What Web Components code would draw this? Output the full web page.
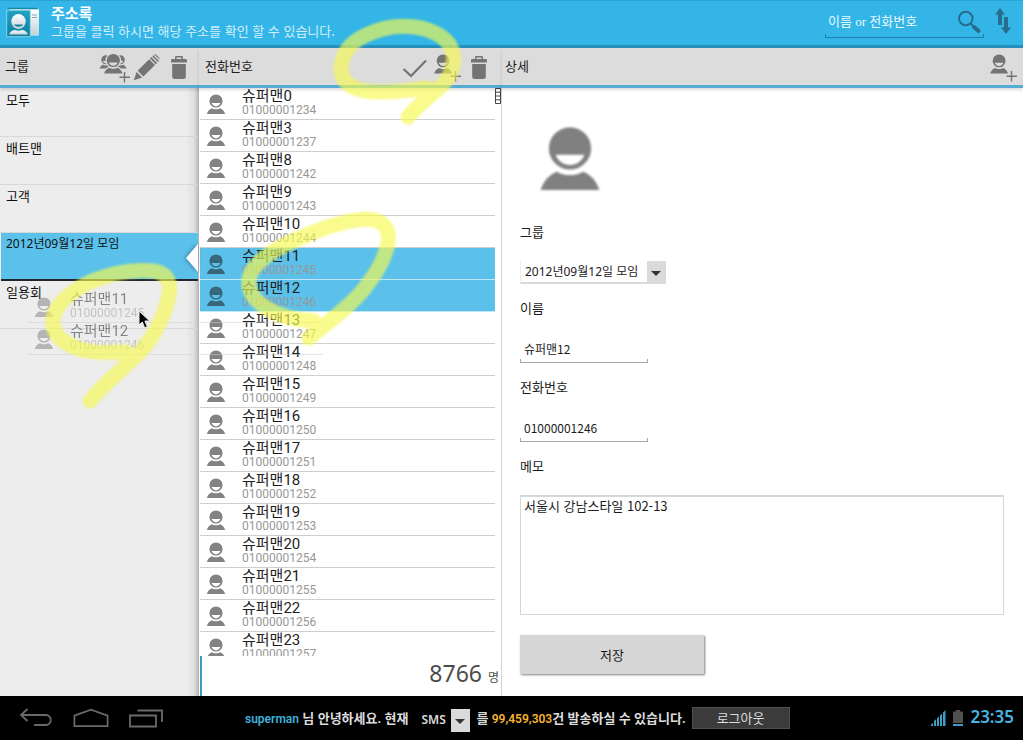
<!DOCTYPE html>
<html lang="ko">
<head>
<meta charset="utf-8">
<meta name="viewport" content="width=device-width, initial-scale=1">
<title>주소록</title>
<style>
  html, body { margin: 0; height: 100%; }
  body {
    font: 13px/18px "Noto Sans", "Noto Sans CJK KR", sans-serif;
    color: #1c1c1c; background: #fff; overflow: hidden;
  }
</style>
</head>
<body>
<address-app></address-app>

<script>
const define = (name, html, setup) => {
  const template = document.createElement('template');
  template.innerHTML = '<style>*{box-sizing:border-box}[hidden]{display:none}</style>' + html;
  customElements.define(name, class extends HTMLElement {
    connectedCallback() {
      if (this.shadowRoot) return;
      this.attachShadow({ mode: 'open' }).append(template.content.cloneNode(true));
      if (setup) setup(this, this.shadowRoot);
    }
  });
};

const PERSON = '<path fill-rule="evenodd" d="M10 .4a6.6 6.6 0 1 1 0 13.2A6.6 6.6 0 0 1 10 .4zM5.5 9c.7 2 2.500 3.200 4.500 3.200s3.800-1.200 4.500-3.200z"/><path d="M.8 20c.9-2.800 2.900-5 5.200-5.700 1.900 1.400 6.100 1.400 8 0 2.300.7 4.300 2.900 5.200 5.700z"/>';
const PLUS = '<path d="M24.500 20v10.500M19.500 25.200h10.500" fill="none" stroke="currentColor" stroke-width="1.400"/>';
const ICONS = {
  person: ['0 0 20 20', PERSON],
  personAdd: ['0 0 32 32', '<g transform="translate(2.300 3) scale(.98)">' + PERSON + '</g>' + PLUS],
  groupAdd: ['0 0 32 32', '<g transform="translate(0 4) scale(.68)">' + PERSON + '</g><g transform="translate(14.500 4) scale(.68)">' + PERSON + '</g><g transform="translate(4.300 2.500) scale(1)" stroke="#dcdcdc" stroke-width="2.600">' + PERSON + '</g><g transform="translate(4.300 2.500)">' + PERSON + '</g><g transform="translate(1 1)">' + PLUS + '</g>'],
  pencil: ['0 0 32 32', '<path d="M2.800 29.200 5.600 21l5.600 5.600zM6.600 19.800 18.200 8.200l5.800 5.800-11.600 11.600zM19 7.400l1.300-1.300 5.800 5.800-1.300 1.300zM21.200 5.300l1.100-1.100 5.800 5.800-1.100 1.100zM23.100 3.400c1.300-1.200 6.300 3.800 5.700 5.200z"/>'],
  trash: ['0 0 32 32', '<path fill-rule="evenodd" d="M12 8V6.200C12 5.200 12.600 5 13.400 5h5.200c.8 0 1.400.2 1.400 1.200V8h2.600c1 0 1.400.6 1.400 1.500V11.500H8V9.500C8 8.600 8.400 8 9.400 8zM13.500 8h5V6.500h-5zM9.200 13h13.600v12.500c0 1.700-.8 2.500-2.500 2.500h-8.600c-1.700 0-2.500-.8-2.500-2.500z"/>'],
  check: ['0 0 32 32', '<path d="M4.500 18 12 25 27 9.500" fill="none" stroke="currentColor" stroke-width="2.200"/>'],
  search: ['0 0 26 26', '<circle cx="7.800" cy="8.500" r="6.800" fill="none" stroke="currentColor" stroke-width="2"/><path d="m12.500 13.500 8 7.500" fill="none" stroke="currentColor" stroke-width="2"/><path d="m16 17 4.500 4" stroke="currentColor" stroke-width="4" stroke-linecap="round"/>'],
  sort: ['0 0 16 26', '<path d="M5.500 0 10.500 6.500H7.500V17h-4V6.500h-3zM11.500 26 6.500 19.500h3V9h4v10.500h3z" transform="translate(-.5)"/>'],
  back: ['0 0 36 20', '<path d="M8.500 1 2 7l6.500 6M2 7h24.500c7 0 7 10 0 10H15" fill="none" stroke="currentColor" stroke-width="1.800"/>'],
  home: ['0 0 38 20', '<path d="M1.500 7.500 19 1.200 36.500 7.500V18.500h-35z" fill="none" stroke="currentColor" stroke-width="1.800"/>'],
  recents: ['0 0 36 20', '<path d="M3 7.500h26v11H3zM10.500 2.500H35v11.500" fill="none" stroke="currentColor" stroke-width="1.800"/>'],
  signal: ['0 0 15 16', '<path d="M0 16v-1.500l2-1.500v3zM3 16v-5l2-1.800V16zM6 16V8.500l2-2V16zM9 16V5.500l2-2V16zM12 16V2.500L14.500 0v16z"/>'],
  battery: ['0 0 10 16', '<path d="M3 0h4v1.500h3V13H0V1.500h3z" fill="#505050"/><path d="M0 14h10v2H0z"/>'],
  ladder: ['0 0 6 16', '<path d="M.5.500h5v15h-5zM.5 4.200h5M.5 8h5M.5 11.800h5" fill="#fff" stroke="#444" stroke-width="1"/>'],
  pointer: ['0 0 14 20', '<path d="M1 1v14l3.300-3 2.400 5.800 2.600-1.100L6.900 11h4.800z" fill="#000" stroke="#eee" stroke-width="1"/>'],
  book: ['0 0 34 32', '<defs><linearGradient id="g" x2="0" y2="1"><stop offset="0" stop-color="#22a3c4"/><stop offset="1" stop-color="#0d7f9f"/></linearGradient><linearGradient id="w" x2="0" y2="1"><stop stop-color="#fff"/><stop offset="1" stop-color="#c4d3d8"/></linearGradient></defs><path d="M3 1.500h30V28.500H22z" fill="#edf5f7"/><path d="M3 .8h28l2 1.400H1z" fill="#178aaa"/><path d="M24 3h9v25h-9z" fill="url(#w)"/><path d="M26 8h5M26 10.500h5" stroke="#84aab5"/><path d="M.7 3.200h23.600v26.500H.7z" fill="url(#g)" stroke="#9fe0f0" stroke-width=".8"/><ellipse cx="12.500" cy="14.500" rx="7.200" ry="7.500" fill="url(#w)"/><path d="M8 17.500c1.500 3 7.500 3 9 0z" fill="#0e819f"/><path d="M3 27.500c1.500-3.500 4-4.500 6-4.500 2 1 5 1 7 0 2 0 4.500 1 6 4.500z" fill="url(#w)"/>']
};

define('x-icon', `
  <style>:host{display:block;flex:none;width:32px;height:32px} svg{display:block;width:100%;height:100%;fill:currentColor}</style>
  <svg aria-hidden="true"></svg>`, (el, root) => {
  const [box, body] = ICONS[el.getAttribute('name')];
  const svg = root.querySelector('svg');
  svg.setAttribute('viewBox', box);
  svg.innerHTML = body;
});

define('tool-bar', `
  <style>
    :host{display:flex;align-items:center;height:40px;padding:0 4px 0 5px;background:#dcdcdc;
      border-bottom:3px solid #56acd3;box-shadow:0 2px 3px rgba(0,0,0,.14);position:relative;z-index:2}
    h2{margin:0;padding-bottom:2px;flex:1;font-size:13px;line-height:18px;font-weight:400}
  </style>
  <h2><slot></slot></h2><slot name="tool"></slot>`);

define('tool-button', `
  <style>
    :host{display:block}
    button{display:block;padding:0;border:0;background:none;color:#747474}
  </style>
  <button type="button"></button>`, (el, root) => {
  const b = root.querySelector('button');
  b.setAttribute('aria-label', el.getAttribute('label'));
  b.innerHTML = `<x-icon name="${el.getAttribute('icon')}"></x-icon>`;
});

define('app-header', `
  <style>
    :host{display:flex;align-items:center;height:48px;padding:0 12px 0 6px;background:#33b5e7;color:#fff;
      border-top:1px solid #2ba4d3;border-bottom:3px solid #2590bb}
    .logo{width:34px;height:32px}
    .titles{flex:1;margin-left:11px;padding-bottom:2px}
    h1{margin:0;font-size:15px;line-height:18px;font-weight:700}
    p{margin:0;color:#d3effa;font-family:"Noto Sans CJK KR",sans-serif}
    label{display:flex;align-items:center;width:159px;height:30px;padding-left:3px;
      background:linear-gradient(#1b80aa,#1b80aa) left bottom/1px 4px no-repeat,
        linear-gradient(#1b80aa,#1b80aa) right bottom/1px 4px no-repeat,
        linear-gradient(#1b80aa,#1b80aa) left bottom/100% 1px no-repeat}
    input{flex:1;min-width:0;padding:0 0 2px;border:0;outline:0;background:none;color:#fff;
      font:13px/18px "Liberation Serif","Noto Sans CJK KR",serif}
    input::placeholder{color:#e8f8ff;opacity:1}
    label x-icon{width:26px;height:26px;color:#256e8c}
    button{padding:0;border:0;background:none;color:#256e8c;margin-left:11px}
    button x-icon{width:16px;height:26px;margin-bottom:4px}
  </style>
  <x-icon class="logo" name="book"></x-icon>
  <div class="titles"><h1>주소록</h1><p>그룹을 클릭 하시면 해당 주소를 확인 할 수 있습니다.</p></div>
  <label><input type="text" placeholder="이름 or 전화번호" aria-label="검색"><x-icon name="search"></x-icon></label>
  <button type="button" aria-label="정렬"><x-icon name="sort"></x-icon></button>`);

define('group-item', `
  <style>
    :host{display:block;position:relative;height:48px;padding:0 6px;border-bottom:1px solid #d8d8d8;
      font-size:13px;line-height:22px;color:#111}
    :host([selected]){margin-left:1px;padding-left:5px;background:#5bc1eb;border-bottom:2px solid #20262c;font-size:12px}
    .notch{display:none}
    :host([selected]) .notch{display:block;position:absolute;right:0;top:11px;width:12px;height:28px;
      filter:drop-shadow(-1px 0 2px rgba(0,0,0,.35))}
    .notch i{display:block;width:12px;height:28px;background:#fff;clip-path:polygon(100% 0,0 50%,100% 100%)}
  </style>
  <slot></slot><span class="notch"><i></i></span>`);

define('group-panel', `
  <style>
    :host{display:flex;flex-direction:column;min-width:0;min-height:0}
    .list{flex:1;padding-top:1px;background:linear-gradient(to left,rgba(0,0,0,.2),rgba(0,0,0,.06) 4px,transparent 12px) #ededed;
      border-right:1px solid #b4b4b4}
  </style>
  <tool-bar>그룹
    <tool-button slot="tool" icon="groupAdd" label="그룹 추가"></tool-button>
    <tool-button slot="tool" icon="pencil" label="그룹 수정"></tool-button>
    <tool-button slot="tool" icon="trash" label="그룹 삭제"></tool-button>
  </tool-bar>
  <div class="list">
    <group-item>모두</group-item>
    <group-item>배트맨</group-item>
    <group-item>고객</group-item>
    <group-item selected>2012년09월12일 모임</group-item>
    <group-item>일용회</group-item>
  </div>`);

define('contact-row', `
  <style>
    :host{display:flex;height:32px;padding-left:6px;border-bottom:1px solid #cfcfcf;color:rgba(30,30,30,.55);
      font-family:Roboto,"Noto Sans CJK KR",sans-serif}
    :host([selected]){background:#5bc1eb;border-color:#c2e6f6}
    x-icon{width:20px;height:20px;margin:6px 16px 0 0}
    div{white-space:nowrap}
    b{display:block;font-weight:400;font-size:15px;line-height:16px;color:#1e1e1e}
    span{display:block;font-size:12px;line-height:13px;color:#989898}
  </style>
  <x-icon name="person"></x-icon>
  <div><b></b><span></span></div>`, (el, root) => {
  root.querySelector('b').textContent = el.getAttribute('name');
  root.querySelector('span').textContent = el.getAttribute('phone');
});

define('contact-panel', `
  <style>
    :host{display:flex;flex-direction:column;min-width:0;min-height:0;background:#fff}
    tool-bar{padding-right:7px;padding-left:6px}
    .body{flex:1;display:flex;flex-direction:column;min-height:0;border-right:1px solid #d0d0d0;padding-left:1px}
    .scroll{flex:1;display:flex;min-height:0;overflow:hidden}
    .rows{flex:1;min-width:0}
    .scroll x-icon{width:6px;height:16px}
    .total{flex:none;display:flex;justify-content:flex-end;align-items:baseline;height:40px;padding-right:2px;
      border-left:2px solid #3b9dbd;color:#4c4c4c;font-size:12px;line-height:34px}
    .total strong{font-weight:400;font-size:23px;margin-right:6px}
  </style>
  <tool-bar>전화번호
    <tool-button slot="tool" icon="check" label="전체 선택"></tool-button>
    <tool-button slot="tool" icon="personAdd" label="연락처 추가"></tool-button>
    <tool-button slot="tool" icon="trash" label="연락처 삭제"></tool-button>
  </tool-bar>
  <div class="body">
    <div class="scroll"><div class="rows"></div><x-icon name="ladder"></x-icon></div>
    <div class="total"><strong>8766</strong>명</div>
  </div>`, (el, root) => {
  const people = [[0, 1234], [3, 1237], [8, 1242], [9, 1243]];
  for (let n = 10; n <= 23; n++) people.push([n, 1234 + n]);
  root.querySelector('.rows').innerHTML = people.map(([n, p]) =>
    `<contact-row name="슈퍼맨${n}" phone="0100000${p}" ${n === 11 || n === 12 ? 'selected' : ''}></contact-row>`).join('');
});

define('drop-down', `
  <style>
    :host{display:inline-flex;height:23px;position:relative}
    select{appearance:none;height:100%;margin:0;padding:0 24px 0 5px;border:0;border-radius:0;outline:0;
      font:inherit;color:inherit;
      background:linear-gradient(#dadada,#dadada) right/19px 100% no-repeat}
    i{position:absolute;right:5px;top:10px;border:5px solid transparent;border-top-color:#333;border-bottom:0;pointer-events:none}
    :host([lined]){width:146px}
    :host([lined]) select{width:100%;border-bottom:2px solid #dadada;border-left:1px solid #eee;padding-left:4px}
    :host(:not([lined])) select{font-weight:600;padding-left:0}
  </style>
  <select></select><i></i>`, (el, root) => {
  const s = root.querySelector('select');
  s.setAttribute('aria-label', el.getAttribute('label'));
  s.add(new Option(el.getAttribute('value')));
});

define('text-field', `
  <style>
    :host{display:block}
    label{display:block;margin:15px 0 20px;line-height:18px}
    input{display:block;width:128px;height:26px;padding:0 4px 3px;border:0;outline:0;color:inherit;
      font:12px/18px "Noto Sans CJK KR",sans-serif;
      background:linear-gradient(#a9a9a9,#a9a9a9) left bottom/1px 4px no-repeat,
        linear-gradient(#a9a9a9,#a9a9a9) right bottom/1px 4px no-repeat,
        linear-gradient(#a9a9a9,#a9a9a9) left bottom/100% 1px no-repeat}
  </style>
  <label for="f"></label><input id="f" type="text">`, (el, root) => {
  root.querySelector('label').textContent = el.getAttribute('label');
  root.querySelector('input').value = el.getAttribute('value');
});

define('detail-panel', `
  <style>
    :host{display:flex;flex-direction:column;min-width:0;min-height:0;background:#fff}
    tool-bar{padding-left:3px}
    form{margin:0;padding:38px 19px 20px 18px}
    .face{width:64px;height:64px;margin-left:18px;color:#808080;filter:blur(1px)}
    .label{display:block;margin:15px 0 20px;line-height:18px}
    .first{margin-top:33px}
    drop-down{display:flex;font-size:12px}
    textarea{display:block;width:100%;height:120px;padding:0 3px;border:1px solid #d3d8d8;border-top-width:2px;
      outline:0;resize:none;font:13px/17px "Noto Sans CJK KR",sans-serif;color:inherit}
    button{display:block;width:184px;height:39px;margin-top:20px;padding:0;border:0;background:#d6d6d6;
      box-shadow:1px 1px 2px rgba(0,0,0,.5);font:inherit;color:inherit}
  </style>
  <tool-bar>상세<tool-button slot="tool" icon="personAdd" label="연락처 추가"></tool-button></tool-bar>
  <form>
    <x-icon class="face" name="person"></x-icon>
    <span class="label first">그룹</span>
    <drop-down lined label="그룹" value="2012년09월12일 모임"></drop-down>
    <text-field label="이름" value="슈퍼맨12"></text-field>
    <text-field label="전화번호" value="01000001246"></text-field>
    <label class="label" for="memo">메모</label>
    <textarea id="memo">서울시 강남스타일 102-13</textarea>
    <button type="button">저장</button>
  </form>`);

define('system-bar', `
  <style>
    :host{display:flex;align-items:center;height:44px;padding:0 9px 0 19px;background:#000;color:#dcdcdc;
      font-size:13px;font-weight:600;white-space:nowrap}
    nav{display:flex;gap:18px;width:226px}
    nav button{padding:0;border:0;background:none;color:#6a6a6a}
    nav x-icon{width:36px;height:20px}
    em,strong{font:600 12px/18px Roboto,sans-serif}
    em{color:#3fb1dc}
    strong{color:#f5b32f}
    drop-down{margin:4px 6px 0 13px;font-size:12px}
    .out{width:98px;height:22px;margin-left:6px;padding:0;border:1px solid #505050;background:#3b3b3b;
      color:#dcdcdc;font:inherit;font-weight:400}
    .status{display:flex;align-items:center;gap:7px;margin-left:auto;color:#3b9fc6}
    .signal{width:15px;height:16px}
    .battery{width:10px;height:16px}
    time{font-size:17px;line-height:20px;padding-bottom:3px;color:#46b5e0}
  </style>
  <nav>
    <button type="button" aria-label="뒤로"><x-icon name="back"></x-icon></button>
    <button type="button" aria-label="홈"><x-icon name="home"></x-icon></button>
    <button type="button" aria-label="최근"><x-icon name="recents"></x-icon></button>
  </nav>
  <span><em>superman</em> 님 안녕하세요. 현재</span>
  <drop-down label="종류" value="SMS"></drop-down>
  <span>를 <strong>99,459,303</strong>건 발송하실 수 있습니다.</span>
  <button class="out" type="button">로그아웃</button>
  <div class="status">
    <x-icon name="signal" class="signal"></x-icon>
    <x-icon name="battery" class="battery"></x-icon>
    <time>23:35</time>
  </div>`);

/* The two rows that are being dragged to another group, and the pointer. */
define('drag-ghost', `
  <style>
    :host{position:absolute;left:28px;top:291px;width:295px;z-index:5;pointer-events:none}
    .rows{opacity:.5}
    .tip{position:absolute;left:110px;top:19px;width:14px;height:20px}
  </style>
  <div class="rows">
    <contact-row name="슈퍼맨11" phone="01000001245"></contact-row>
    <contact-row name="슈퍼맨12" phone="01000001246"></contact-row>
  </div>
  <x-icon class="tip" name="pointer"></x-icon>`);

/* Highlighter marks drawn by hand over the page. */
define('marker-layer', `
  <style>
    :host{position:absolute;left:0;top:0;z-index:9;pointer-events:none}
    svg{display:block;width:480px;height:420px;filter:blur(.8px)}
    path{fill:none;stroke:#f6f951;stroke-opacity:.66;stroke-width:15;stroke-linecap:round;stroke-linejoin:round}
  </style>
  <svg viewBox="0 0 480 420" aria-hidden="true">
    <path d="M427 88C411 90 396 92 380 92C356 92 341 85 341 68C342 53 351 42 366 35C383 27 400 25 415 27C436 30 450 40 453 53C455 67 450 78 440 87C428 98 417 106 408 117"/>
    <path d="M126 352C105 353 88 353 74 347C58 340 50 330 54 315C58 302 74 289 92 281C112 273 135 269 153 271C169 273 172 284 168 299C163 320 152 339 139 353C124 368 100 387 90 401"/>
    <path d="M314 321C295 320 279 316 266 308C251 298 245 286 251 273C259 257 281 246 302 237C325 227 349 220 367 219C385 220 390 230 388 243C385 260 376 274 364 289C349 308 325 324 309 338"/>
  </svg>`);

define('address-app', `
  <style>
    :host{display:flex;flex-direction:column;height:100vh;position:relative}
    main{flex:1;display:grid;grid-template-columns:199fr 303fr 521fr;grid-template-rows:minmax(0,1fr);min-height:0}
    app-header,system-bar{flex:none}
  </style>
  <app-header></app-header>
  <main>
    <group-panel></group-panel>
    <contact-panel></contact-panel>
    <detail-panel></detail-panel>
  </main>
  <system-bar></system-bar>
  <drag-ghost></drag-ghost>
  <marker-layer></marker-layer>`);
</script>
</body>
</html>
